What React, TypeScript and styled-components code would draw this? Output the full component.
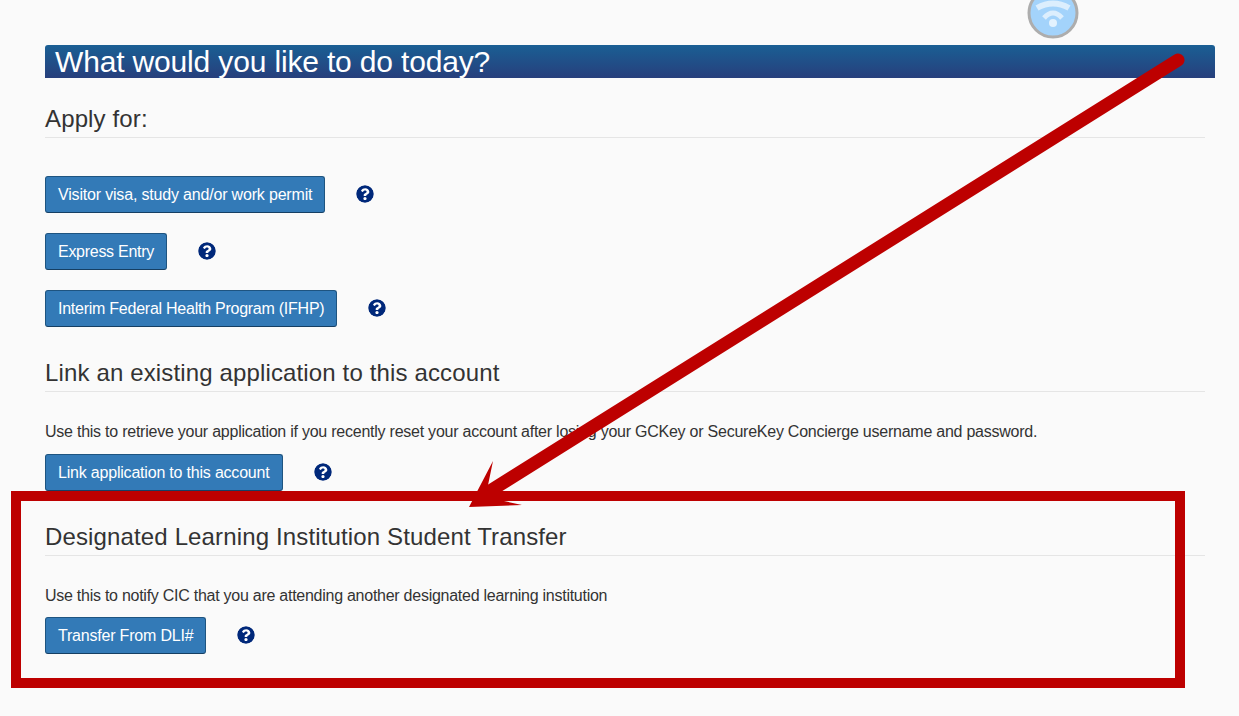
import React from "react";
import styled, {createGlobalStyle} from "styled-components";
import {FaQuestionCircle} from "react-icons/fa";

const GlobalStyle = createGlobalStyle`
  html, body {
    margin: 0;
    padding: 0;
    background: #fafafa;
    font-family: "Liberation Sans", Arial, sans-serif;
    color: #333;
    overflow: hidden;
  }
`

const Page = styled.div`
  position: relative;
  width: 1239px;
  height: 716px;
  box-sizing: border-box;
  padding: 45px 24px 0 45px;
  overflow: hidden;
`

const Banner = styled.h1`
  margin: 0;
  height: 33px;
  box-sizing: border-box;
  padding-left: 10px;
  background: linear-gradient(to bottom, #1a5f94, #273f7c);
  border-radius: 3px 3px 0 0;
  color: #fff;
  font-size: 30px;
  font-weight: 400;
  line-height: 33px;
  letter-spacing: -0.16px;
  white-space: nowrap;
`

const Section = styled.section<{$top: number}>`
  width: 1160px;
  margin-top: ${props => props.$top}px;
`

const Heading = styled.h2`
  margin: 0;
  height: 40px;
  box-sizing: border-box;
  border-bottom: 1px solid #e5e5e5;
  font-size: 24px;
  font-weight: 400;
  line-height: 42px;
  letter-spacing: 0.14px;
  color: #333;
`

const ButtonStack = styled.div`
  display: flex;
  flex-direction: column;
  gap: 20px;
  margin-top: 38px;
`

const Row = styled.div<{$gap?: number}>`
  display: flex;
  align-items: center;
  margin-top: ${props => props.$gap ?? 0}px;
`

const Action = styled.button<{$tracking: number}>`
  height: 37px;
  box-sizing: border-box;
  padding: 0 12px;
  background: #337ab7;
  border: 1px solid #1e5480;
  border-bottom-color: #153f63;
  border-radius: 3px;
  color: #fff;
  font-family: inherit;
  font-size: 16px;
  letter-spacing: ${props => props.$tracking}px;
  white-space: nowrap;
`

const Help = styled(FaQuestionCircle)`
  width: 18px;
  height: 18px;
  margin: 0 0 1px 31px;
  color: #00287a;
  background: radial-gradient(circle, #fff 60%, transparent 62%);
  border-radius: 50%;
`

const Note = styled.p<{$tracking: number}>`
  margin: 30px 0 0;
  height: 20px;
  font-size: 16px;
  line-height: 20px;
  letter-spacing: ${props => props.$tracking}px;
  white-space: nowrap;
`

const WifiBadge = styled.svg`
  position: absolute;
  left: 1027px;
  top: -13px;
  width: 52px;
  height: 52px;
`

const Frame = styled.div`
  position: absolute;
  left: 11px;
  top: 491px;
  width: 1174px;
  height: 197px;
  box-sizing: border-box;
  border: 10px solid #bd0000;
  pointer-events: none;
`

const ArrowLayer = styled.svg`
  position: absolute;
  inset: 0;
  width: 1239px;
  height: 716px;
  pointer-events: none;
`

type ActionItem = {
    label: string
    tracking: number
}

const applyItems: ActionItem[] = [
    {label: "Visitor visa, study and/or work permit", tracking: -0.18},
    {label: "Express Entry", tracking: -0.28},
    {label: "Interim Federal Health Program (IFHP)", tracking: -0.25},
]

const ActionRow: React.FC<ActionItem & {gap?: number}> = props => (
    <Row $gap={props.gap}>
        <Action $tracking={props.tracking}>{props.label}</Action>
        <Help/>
    </Row>
)

const App: React.FC = () => {
    return (
        <Page>
            <GlobalStyle/>
            <Banner>What would you like to do today?</Banner>

            <Section $top={20}>
                <Heading>Apply for:</Heading>
                <ButtonStack>
                    {applyItems.map(item => <ActionRow key={item.label} {...item}/>)}
                </ButtonStack>
            </Section>

            <Section $top={25}>
                <Heading>Link an existing application to this account</Heading>
                <Note $tracking={-0.24}>Use this to retrieve your application if you recently reset your account after losing your GCKey or SecureKey Concierge username and password.</Note>
                <ActionRow gap={12} label="Link application to this account" tracking={-0.2}/>
            </Section>

            <Section $top={25}>
                <Heading>Designated Learning Institution Student Transfer</Heading>
                <Note $tracking={-0.26}>Use this to notify CIC that you are attending another designated learning institution</Note>
                <ActionRow gap={11} label="Transfer From DLI#" tracking={-0.2}/>
            </Section>

            <WifiBadge viewBox="0 0 52 52">
                <circle cx="26" cy="26" r="24" fill="#a3d3fb" stroke="#adadad" strokeWidth="3"/>
                <path d="M10 21 Q26 12 42 21" fill="none" stroke="#dceefd" strokeWidth="6"/>
                <path d="M17 31 Q26 21 35 31" fill="none" stroke="#dceefd" strokeWidth="5"/>
                <circle cx="26" cy="36" r="4" fill="#e3f2fe"/>
            </WifiBadge>

            <Frame/>

            <ArrowLayer viewBox="0 0 1239 716">
                <line x1="1178" y1="60" x2="490" y2="491" stroke="#bd0000" strokeWidth="13" strokeLinecap="round"/>
                <polygon points="493,461 487,490 504,501 522,505 469,507" fill="#bd0000"/>
            </ArrowLayer>
        </Page>
    )
}

export default App
